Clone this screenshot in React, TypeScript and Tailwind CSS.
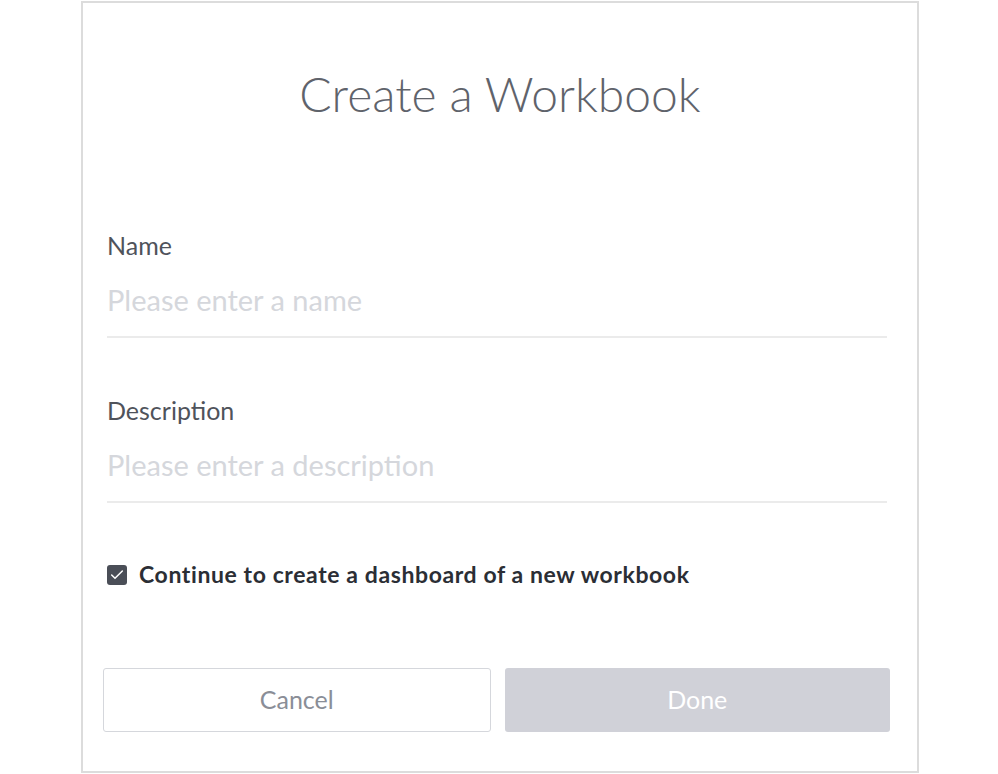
import { Check } from "lucide-react";

export default function App() {
  return (
    <div className="min-h-screen bg-white font-['Lato','Liberation_Sans',sans-serif]">
      <div className="ml-[81px] mt-[1px] flex h-[772px] w-[838px] flex-col border-2 border-[#dcdcdc] bg-white">
        <h1 className="mt-[67px] text-center text-[48px] font-light leading-none text-[#5f636b]">
          Create a Workbook
        </h1>

        <div className="flex flex-col pl-[24px] pr-[30px]">
          <label className="mt-[115px] text-[25px] leading-none text-[#4f535b]">Name</label>
          <div className="border-b-2 border-[#ebebeb] pt-[27px] pb-[22px] text-[29px] leading-none text-[#d5d7dc]">
            Please enter a name
          </div>

          <label className="mt-[60px] text-[25px] leading-none text-[#4f535b]">Description</label>
          <div className="border-b-2 border-[#ebebeb] pt-[27px] pb-[22px] text-[29px] leading-none text-[#d5d7dc]">
            Please enter a description
          </div>

          <div className="mt-[60px] flex items-center gap-[12px]">
            <span className="flex h-[20px] w-[20px] shrink-0 items-center justify-center rounded-[3px] bg-[#4a4e57]">
              <Check size={16} strokeWidth={2.25} className="text-white" />
            </span>
            <span className="text-[23px] font-bold leading-none tracking-[0.6px] text-[#2b2e35]">
              Continue to create a dashboard of a new workbook
            </span>
          </div>
        </div>

        <div className="mt-[82px] flex gap-[14px] pl-[20px] pr-[27px]">
          <button
            type="button"
            className="h-[64px] flex-1 rounded-[3px] border border-[#d5d7dc] bg-white text-[25px] text-[#8a8e97]"
          >
            Cancel
          </button>
          <button
            type="button"
            disabled
            className="h-[64px] flex-1 rounded-[3px] bg-[#d0d1d8] text-[25px] text-white"
          >
            Done
          </button>
        </div>
      </div>
    </div>
  );
}
